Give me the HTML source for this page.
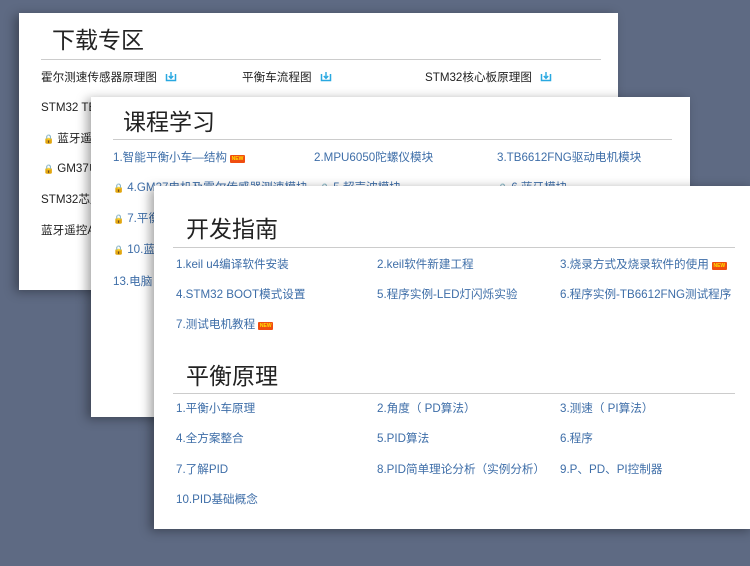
<!DOCTYPE html>
<html><head><meta charset="utf-8"><style>
*{margin:0;padding:0;box-sizing:border-box}
body{width:750px;height:566px;background:#5e6a83;position:relative;overflow:hidden;font-family:"Liberation Sans","Noto Sans CJK SC",sans-serif}
.p{position:absolute;background:#fff;box-shadow:-4px 2px 10px rgba(0,0,0,.35)}
.t{position:absolute;font-size:23px;color:#222;white-space:nowrap;line-height:1}
.l{position:absolute;height:1px;background:#ccc}
.a{position:absolute;font-size:11.6px;white-space:nowrap;line-height:1;color:#3e6ea8;top:0}
.k{color:#222}
.n{display:inline-block;width:15px;height:8px;background:#f04d10;border-radius:1px;vertical-align:1px;margin-left:3px;font-size:5px;color:#ffe000;text-align:center;line-height:8px;font-weight:bold}
.d{display:inline-block;width:12px;height:11px;vertical-align:-1px;margin-left:8px}
.lk{color:#c9a227;font-size:9px;margin-right:3px}
</style></head><body>
<svg width="0" height="0" style="position:absolute"><symbol id="dl" viewBox="0 0 12 11"><path d="M1.5 3V9.5H10.5V3" fill="none" stroke="#29a8e0" stroke-width="1.5"/><path d="M6 1V7M3.8 5L6 7.3 8.2 5" fill="none" stroke="#29a8e0" stroke-width="1.4"/></symbol></svg>
<div class="p" style="left:19px;top:13px;width:599px;height:277px">
<div class="t" style="left:33px;top:16px">下载专区</div>
<div class="l" style="left:22px;top:46px;width:560px"></div>
<div class="a k" style="left:22px;top:58px">霍尔测速传感器原理图<svg class="d"><use href="#dl"/></svg></div>
<div class="a k" style="left:223px;top:58px">平衡车流程图<svg class="d"><use href="#dl"/></svg></div>
<div class="a k" style="left:406px;top:58px">STM32核心板原理图<svg class="d"><use href="#dl"/></svg></div>
<div class="a k" style="left:22px;top:89px">STM32 TB</div>
<div class="a k" style="left:24px;top:120px"><span class="lk">🔒</span>蓝牙遥控</div>
<div class="a k" style="left:24px;top:150px"><span class="lk">🔒</span>GM37电</div>
<div class="a k" style="left:22px;top:181px">STM32芯片</div>
<div class="a k" style="left:22px;top:212px">蓝牙遥控APP</div>
</div>
<div class="p" style="left:91px;top:97px;width:599px;height:320px">
<div class="t" style="left:32px;top:14px">课程学习</div>
<div class="l" style="left:22px;top:42px;width:559px"></div>
<div class="a" style="left:22px;top:55px">1.智能平衡小车—结构<span class="n">NEW</span></div>
<div class="a" style="left:223px;top:55px">2.MPU6050陀螺仪模块</div>
<div class="a" style="left:406px;top:55px">3.TB6612FNG驱动电机模块</div>
<div class="a" style="left:22px;top:85px"><span class="lk">🔒</span>4.GM37电机及霍尔传感器测速模块</div>
<div class="a" style="left:228px;top:85px"><span class="lk">🔒</span>5.超声波模块</div>
<div class="a" style="left:406px;top:85px"><span class="lk">🔒</span>6.蓝牙模块</div>
<div class="a" style="left:22px;top:116px"><span class="lk">🔒</span>7.平衡</div>
<div class="a" style="left:22px;top:147px"><span class="lk">🔒</span>10.蓝牙</div>
<div class="a" style="left:22px;top:179px">13.电脑</div>
</div>
<div class="p" style="left:154px;top:186px;width:600px;height:343px">
<div class="t" style="left:32px;top:32px">开发指南</div>
<div class="l" style="left:19px;top:61px;width:562px"></div>
<div class="a" style="left:22px;top:73px">1.keil u4编译软件安装</div>
<div class="a" style="left:223px;top:73px">2.keil软件新建工程</div>
<div class="a" style="left:406px;top:73px">3.烧录方式及烧录软件的使用<span class="n">NEW</span></div>
<div class="a" style="left:22px;top:103px">4.STM32 BOOT模式设置</div>
<div class="a" style="left:223px;top:103px">5.程序实例-LED灯闪烁实验</div>
<div class="a" style="left:406px;top:103px">6.程序实例-TB6612FNG测试程序</div>
<div class="a" style="left:22px;top:133px">7.测试电机教程<span class="n">NEW</span></div>
<div class="t" style="left:32px;top:179px">平衡原理</div>
<div class="l" style="left:19px;top:207px;width:562px"></div>
<div class="a" style="left:22px;top:217px">1.平衡小车原理</div>
<div class="a" style="left:223px;top:217px">2.角度（ PD算法）</div>
<div class="a" style="left:406px;top:217px">3.测速（ PI算法）</div>
<div class="a" style="left:22px;top:247px">4.全方案整合</div>
<div class="a" style="left:223px;top:247px">5.PID算法</div>
<div class="a" style="left:406px;top:247px">6.程序</div>
<div class="a" style="left:22px;top:278px">7.了解PID</div>
<div class="a" style="left:223px;top:278px">8.PID简单理论分析（实例分析）</div>
<div class="a" style="left:406px;top:278px">9.P、PD、PI控制器</div>
<div class="a" style="left:22px;top:308px">10.PID基础概念</div>
</div>
</body></html>
